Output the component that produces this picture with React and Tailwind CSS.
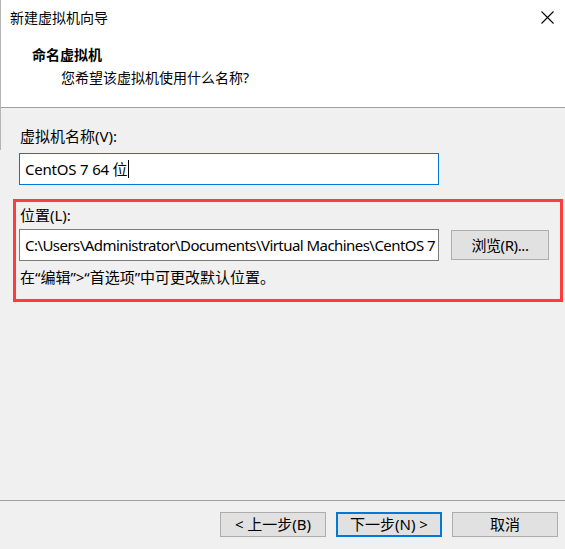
import React from 'react';

const FONT = "font-['Noto_Sans','Noto_Sans_CJK_SC',sans-serif]";

function WinButton({ children, primary }) {
  return (
    <button
      type="button"
      className={`w-[106px] h-[25px] bg-[#e1e1e1] text-[15px] leading-none text-black flex items-center justify-center ${
        primary ? 'border-2 border-[#0078d7]' : 'border border-[#adadad]'
      }`}
    >
      {children}
    </button>
  );
}

export default function App() {
  return (
    <div className={`relative w-[565px] h-[549px] bg-[#f0f0f0] flex flex-col text-black ${FONT}`}>
      <div className="absolute left-0 top-0 w-px h-[150px] bg-[#b4b4b4]" />

      {/* header */}
      <div className="bg-white h-[108px] border-b border-[#a0a0a0] shrink-0">
        <div className="flex items-start justify-between pl-[10px] pr-[11px] pt-[8px]">
          <p className="text-[14px] leading-[20px]">新建虚拟机向导</p>
          <svg width="13" height="13" viewBox="0 0 13 13" className="mt-[3px]">
            <path d="M0.5 0.5 L12.5 12.5 M12.5 0.5 L0.5 12.5" stroke="#000" strokeWidth="1.1" fill="none" />
          </svg>
        </div>
        <p className="pl-[32px] mt-[17px] text-[14px] font-bold leading-[20px]">命名虚拟机</p>
        <p className="pl-[61px] mt-[3px] text-[14px] leading-[20px]">您希望该虚拟机使用什么名称?</p>
      </div>

      {/* body */}
      <div className="pt-[18px] px-[19px]">
        <p className="pl-px text-[15px] leading-[20px]">虚拟机名称(V):</p>
        <div className="mt-[7px] w-[420px] h-[32px] bg-white border border-[#0078d7] flex items-center pl-[5px] text-[15px] leading-none tracking-[-0.2px]">
          <span>CentOS 7 64 位</span>
          <span className="ml-px w-px h-[18px] bg-black" />
        </div>
      </div>

      <div className="mt-[14px] ml-[13px] w-[550px] h-[103px] border-[3px] border-[#ff3c3c] pl-[3px] pt-[3px]">
        <p className="pl-px text-[15px] leading-[20px]">位置(L):</p>
        <div className="mt-[4px] flex items-start gap-[12px]">
          <div className="w-[420px] shrink-0 h-[32px] bg-white border border-[#7a7a7a] flex items-center pl-[5px] text-[15px] leading-none tracking-[-0.55px] overflow-hidden whitespace-nowrap">
            C:\Users\Administrator\Documents\Virtual Machines\CentOS 7 64 位
          </div>
          <button
            type="button"
            className="mt-px w-[98px] shrink-0 h-[30px] bg-[#e1e1e1] border border-[#adadad] text-[15px] leading-none tracking-[-0.4px] flex items-center justify-center"
          >
            浏览(R)...
          </button>
        </div>
        <p className="pl-px mt-[6px] text-[15px] leading-[20px]">在“编辑”&gt;“首选项”中可更改默认位置。</p>
      </div>

      {/* footer */}
      <div className="mt-auto border-t border-[#a0a0a0] h-[49px] flex justify-end items-start pt-[11px] pr-[7px] gap-[10px]">
        <WinButton>&lt; 上一步(B)</WinButton>
        <WinButton primary>下一步(N) &gt;</WinButton>
        <WinButton>取消</WinButton>
      </div>
    </div>
  );
}
